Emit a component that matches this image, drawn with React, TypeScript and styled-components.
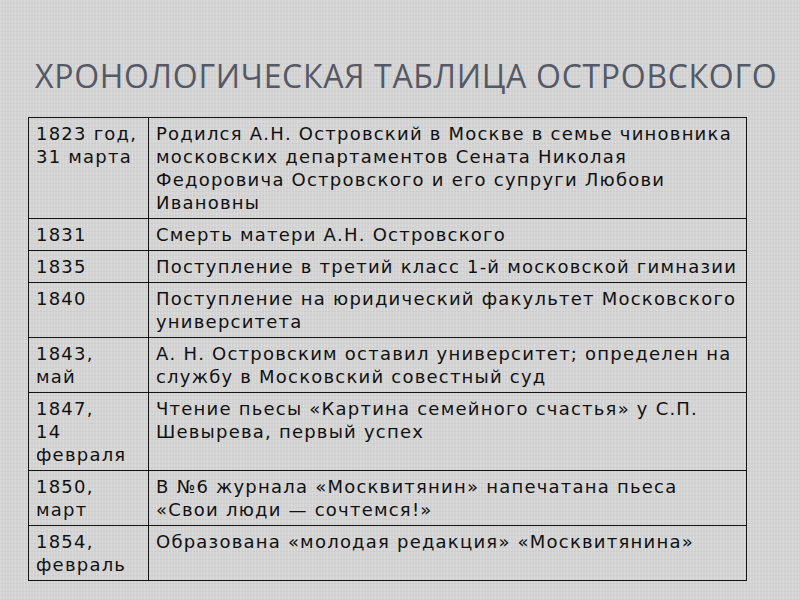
import React from "react";
import styled, { createGlobalStyle } from "styled-components";

const Global = createGlobalStyle`
  html, body { margin: 0; padding: 0; }
  body {
    width: 800px;
    height: 600px;
    overflow: hidden;
    background-color: #d3d3d3;
    background-image:
      repeating-linear-gradient(90deg, rgba(255,255,255,0.18) 0px, rgba(255,255,255,0.18) 1px, rgba(0,0,0,0) 1px, rgba(0,0,0,0) 3px),
      repeating-linear-gradient(0deg, rgba(0,0,0,0.03) 0px, rgba(0,0,0,0.03) 1px, rgba(0,0,0,0) 1px, rgba(0,0,0,0) 4px);
  }
`;

const Slide = styled.div`
  width: 800px;
  height: 600px;
  box-sizing: border-box;
  padding: 52px 0 0 28px;
  display: flex;
  flex-direction: column;
`;

const Title = styled.h1`
  margin: 0 0 0 7px;
  font-family: "Open Sans", "DejaVu Sans", sans-serif;
  font-weight: 400;
  font-size: 32px;
  line-height: 48px;
  letter-spacing: 0.7px;
  color: #555966;
  white-space: nowrap;
`;

const Table = styled.table`
  margin-top: 17px;
  width: 719px;
  border-collapse: collapse;
  table-layout: fixed;
  font-family: "DejaVu Sans", sans-serif;
  font-size: 18px;
  line-height: 23px;
  letter-spacing: 1.22px;
  color: #111;
`;

const Cell = styled.td<{ $w?: number }>`
  box-sizing: border-box;
  border: 1px solid #141414;
  vertical-align: top;
  padding: 4px 4px 4px 7px;
  ${(p) => (p.$w ? `width: ${p.$w}px;` : "")}
`;

const rows: [string[], string][] = [
  [["1823 год,", "31 марта"], "Родился А.Н. Островский в Москве в семье чиновника московских департаментов Сената Николая Федоровича Островского и его супруги Любови Ивановны"],
  [["1831"], "Смерть матери А.Н. Островского"],
  [["1835"], "Поступление в третий класс 1-й московской гимназии"],
  [["1840"], "Поступление на юридический факультет Московского университета"],
  [["1843,", "май"], "А. Н. Островским оставил университет; определен на службу в Московский совестный суд"],
  [["1847,", "14", "февраля"], "Чтение пьесы «Картина семейного счастья» у С.П. Шевырева, первый успех"],
  [["1850,", "март"], "В №6 журнала «Москвитянин» напечатана пьеса «Свои люди — сочтемся!»"],
  [["1854,", "февраль"], "Образована «молодая редакция» «Москвитянина»"],
];

export default function App() {
  return (
    <>
      <Global />
      <Slide>
        <Title>ХРОНОЛОГИЧЕСКАЯ ТАБЛИЦА ОСТРОВСКОГО</Title>
        <Table>
          <tbody>
            {rows.map(([d, t], i) => (
              <tr key={i}>
                <Cell $w={120}>
                  {d.map((l, j) => (
                    <React.Fragment key={j}>
                      {j > 0 && <br />}
                      {l}
                    </React.Fragment>
                  ))}
                </Cell>
                <Cell>{t}</Cell>
              </tr>
            ))}
          </tbody>
        </Table>
      </Slide>
    </>
  );
}
